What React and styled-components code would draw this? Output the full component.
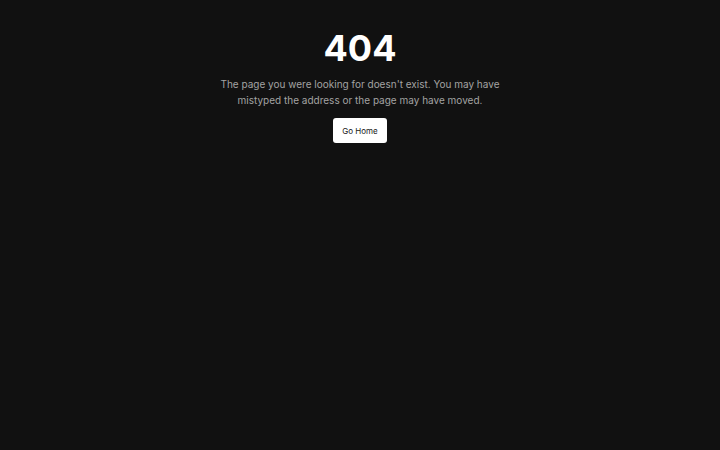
import React from 'react';
import styled, { createGlobalStyle } from 'styled-components';

const GlobalStyle = createGlobalStyle`
  html, body {
    margin: 0;
    padding: 0;
    background: #111111;
  }
  body {
    font-family: Inter, "Noto Sans", sans-serif;
  }
`;

const Page = styled.main`
  min-height: 100vh;
  display: flex;
  flex-direction: column;
  align-items: center;
  padding-top: 28px;
  box-sizing: border-box;
`;

const Code = styled.h1`
  margin: 0;
  font-size: 36px;
  font-weight: 700;
  line-height: 40px;
  color: #ffffff;
`;

const Message = styled.p`
  margin: 7.5px 0 0;
  max-width: 290px;
  font-size: 10px;
  line-height: 16px;
  color: #a3a3a3;
  text-align: center;
`;

const HomeButton = styled.a`
  margin-top: 10.5px;
  display: inline-flex;
  align-items: center;
  justify-content: center;
  height: 25px;
  padding: 0 9.5px;
  border-radius: 3px;
  background: #ffffff;
  color: #171717;
  font-size: 8px;
  text-decoration: none;
  cursor: pointer;
`;

export default function App() {
  return (
    <>
      <GlobalStyle />
      <Page>
        <Code>404</Code>
        <Message>
          The page you were looking for doesn't exist. You may have mistyped the address or the page may have moved.
        </Message>
        <HomeButton href="#">Go Home</HomeButton>
      </Page>
    </>
  );
}
